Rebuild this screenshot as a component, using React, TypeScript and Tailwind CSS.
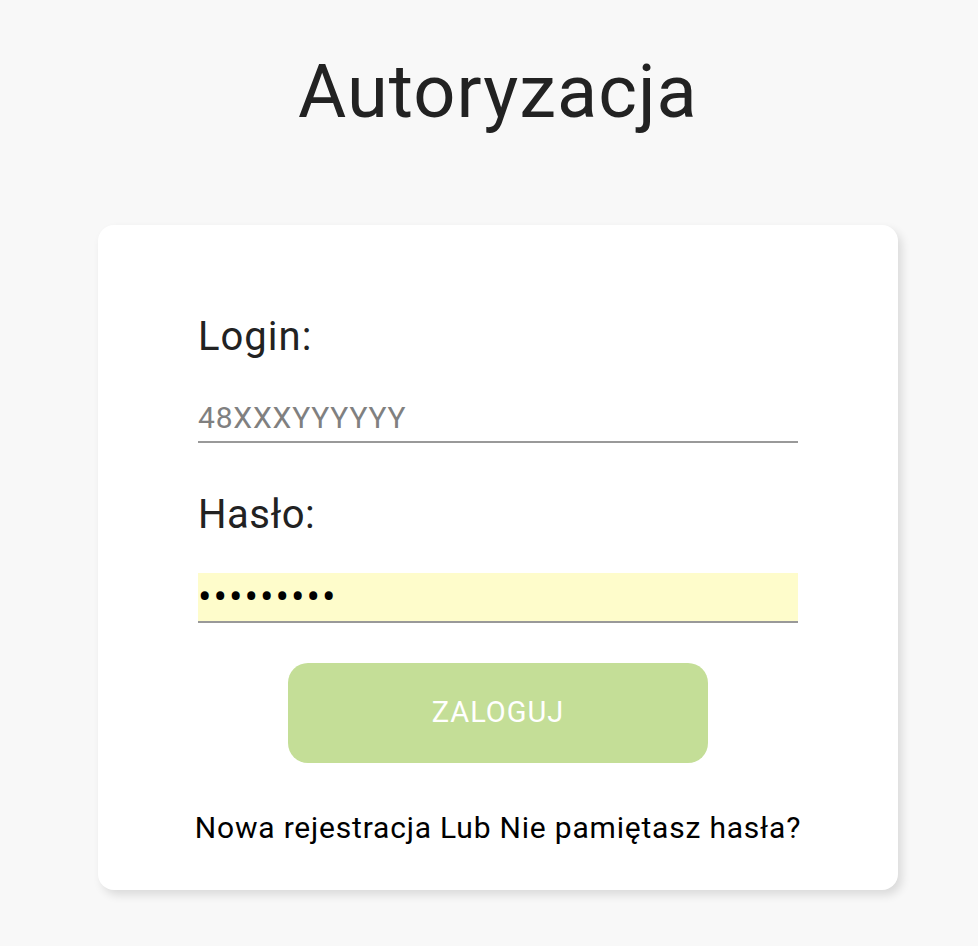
import React from "react";

const font = { fontFamily: "Roboto, 'Noto Sans', sans-serif" };

const App = () => {
  return (
    <div className="min-h-screen w-full bg-[#f8f8f8] pl-[18px] flex flex-col items-center" style={font}>
      <h1 className="pt-[55px] text-[74px] leading-[74px] font-normal text-[#222222] tracking-[1px]">
        Autoryzacja
      </h1>

      <div className="mt-[96px] w-[800px] bg-white rounded-[16px] shadow-[4px_5px_10px_rgba(0,0,0,0.12)] px-[100px] pt-[88px] pb-[45px] flex flex-col">
        <label className="block h-[48px] text-[40px] leading-[48px] text-[#222222] tracking-[1px]">Login:</label>
        <input
          type="text"
          placeholder="48XXXYYYYYY"
          className="mt-[32px] h-[50px] w-full border-b-2 border-[#999999] bg-transparent text-[30px] tracking-[0.8px] text-[#333] placeholder:text-[#808080] outline-none"
        />

        <label className="mt-[48px] block h-[48px] text-[40px] leading-[48px] text-[#222222] tracking-[0.5px]">Hasło:</label>
        <input
          type="password"
          defaultValue="123456789"
          readOnly
          className="mt-[34px] h-[50px] w-full border-b-2 border-[#999999] bg-[#fefccb] text-[40px] leading-[46px] tracking-[2px] text-black outline-none"
        />

        <button className="mt-[40px] self-center w-[420px] h-[100px] rounded-[20px] bg-[#c4de97] text-white text-[29px] tracking-[1px]">
          ZALOGUJ
        </button>

        <p className="mt-[48px] -mx-[100px] whitespace-nowrap text-center text-[30px] leading-[34px] tracking-[0.8px] text-black">
          Nowa rejestracja Lub Nie pamiętasz hasła?
        </p>
      </div>
    </div>
  );
};

export default App;
